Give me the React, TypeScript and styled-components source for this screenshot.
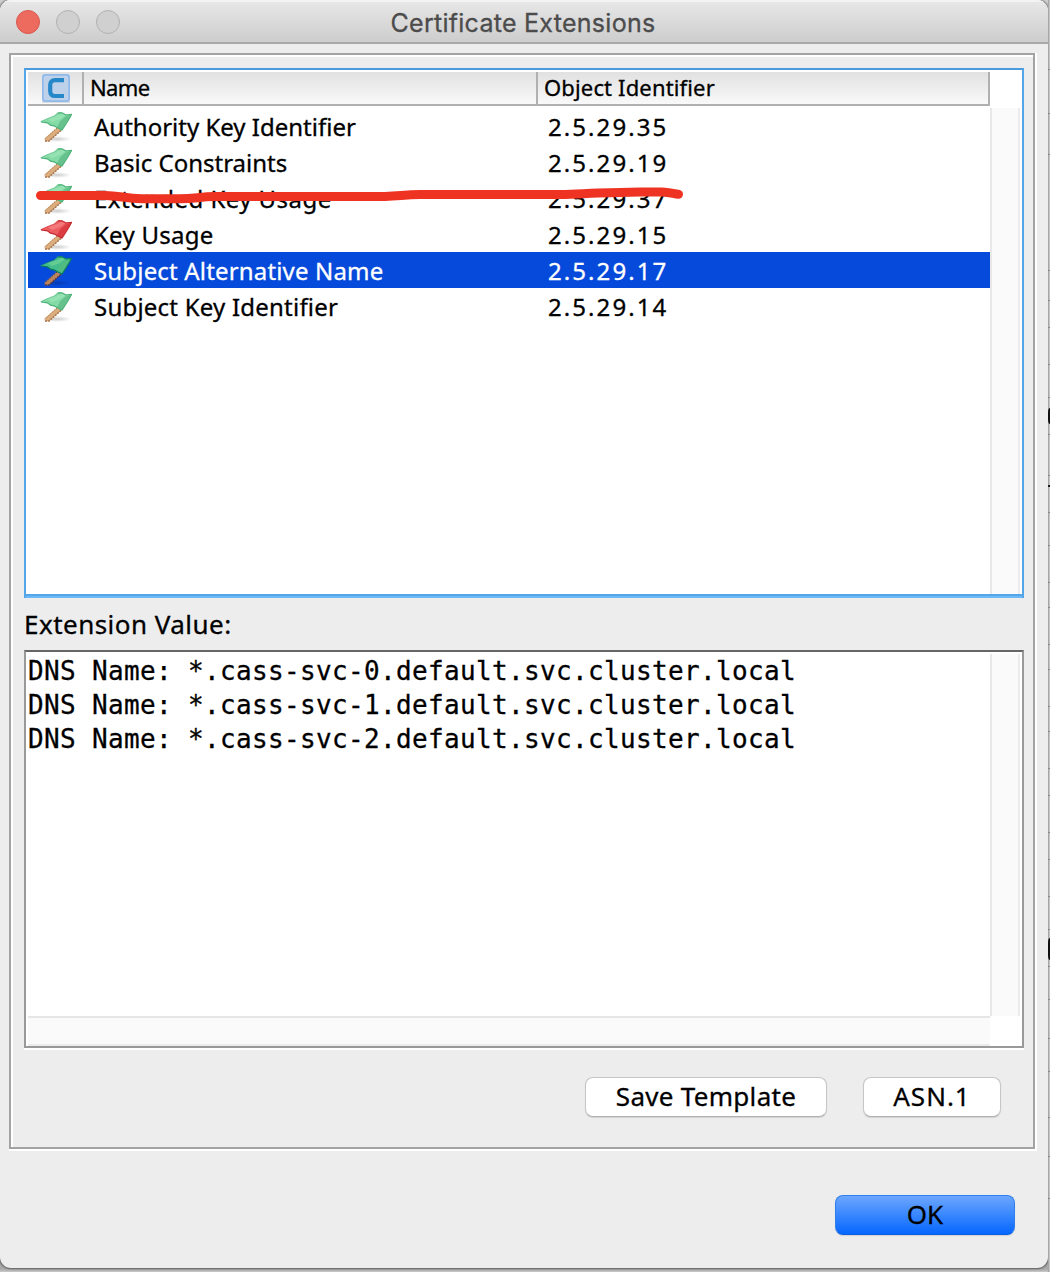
import React from "react";
import styled, { createGlobalStyle } from "styled-components";

const GlobalStyle = createGlobalStyle`
  *, *::before, *::after { box-sizing: border-box; }
  body { margin: 0; background: #b2b2b2; }
`;

const sans = `"Noto Sans", "Open Sans", sans-serif`;

const Desktop = styled.div`
  display: flex;
  width: 1050px;
  height: 1272px;
  overflow: hidden;
  background: linear-gradient(to bottom, #cfcfcf 0, #cfcfcf 24px, #b4b4b4 60px, #a9a9a9 1269px, #cacaca 1272px);
`;

const Window = styled.main`
  display: flex;
  flex-direction: column;
  width: 1048px;
  height: 1268px;
  flex: none;
  border-radius: 11px;
  background: #ededed;
  overflow: hidden;
  font-family: ${sans};
  color: #000;
  -webkit-text-stroke: 0.3px currentColor;
  box-shadow: 0 0 2px 1px rgba(0, 0, 0, 0.45);
`;

const TitleBar = styled.header`
  display: grid;
  grid-template-columns: 1fr auto 1fr;
  align-items: center;
  height: 44px;
  flex: none;
  padding: 0 18px 0 16px;
  border-bottom: 2px solid #a9a9a9;
  box-shadow: inset 0 2px 0 #f3f3f3;
  background: linear-gradient(#e8e8e8, #cdcdcd);
`;

const Lights = styled.div`
  display: flex;
  gap: 16px;
`;

const Light = styled.span<{ $active?: boolean }>`
  width: 24px;
  height: 24px;
  border-radius: 50%;
  border: 1px solid ${(p) => (p.$active ? "#d9574c" : "#b1b1b1")};
  background: ${(p) => (p.$active ? "#ed6a5f" : "#d0d0d0")};
`;

const Title = styled.h1`
  margin: 3px 0 0;
  font: 400 25px/40px Inter, sans-serif;
  letter-spacing: 0.27px;
  color: #4c4c4c;
  white-space: nowrap;
`;

const Group = styled.section`
  display: flex;
  flex-direction: column;
  height: 1096px;
  margin: 9px 13px 0 9px;
  padding: 13px 9px 0 13px;
  border: 2px solid #a3a3a3;
  box-shadow: inset 2px 2px 0 #fff, 2px 0 0 #fff, 0 2px 0 #fff, 2px 2px 0 #fff;
`;

const TablePane = styled.div`
  display: flex;
  flex-direction: column;
  height: 530px;
  flex: none;
  padding: 2px;
  border: 2px solid #54a6e8;
  border-top-color: #4a9ade;
  border-bottom: none;
  box-shadow: inset 0 -2px 0 #6db9f7, inset 0 -4px 0 #54a6e8;
  background: #fff;
`;

const TableHead = styled.div`
  display: grid;
  grid-template-columns: 56px 454px 452px;
  width: 962px;
  height: 34px;
  flex: none;
  border-bottom: 2px solid #b0b0b0;
  background: linear-gradient(#e1e1e1, #f9f9f9);
`;

const HeadCell = styled.div<{ $icon?: boolean; $spacing?: number }>`
  display: flex;
  align-items: flex-start;
  padding: ${(p) => (p.$icon ? "2px 0 0 14px" : "0 0 0 6px")};
  border-right: 2px solid #b0b0b0;
  font-size: 22px;
  letter-spacing: ${(p) => p.$spacing ?? 0}px;
  line-height: 30px;
`;

const Scroller = styled.div`
  display: flex;
  height: 486px;
  margin-top: 2px;
`;

const Rows = styled.div`
  position: relative;
  width: 962px;
`;

const Row = styled.div<{ $selected?: boolean }>`
  display: grid;
  grid-template-columns: 66px 454px 1fr;
  height: 36px;
  line-height: 36px;
  font-size: 24px;
  color: ${(p) => (p.$selected ? "#fff" : "#000")};
  background: ${(p) => (p.$selected ? "#064adb" : "transparent")};
`;

const FlagCell = styled.span`
  display: flex;
  padding: 2px 0 0 12px;
`;

const Cell = styled.span<{ $spacing: number }>`
  padding-top: 1px;
  letter-spacing: ${(p) => p.$spacing}px;
  white-space: nowrap;
`;

const Scribble = styled.svg`
  position: absolute;
  left: 0;
  top: 72px;
`;

const VerticalTrack = styled.div<{ $height: number }>`
  width: 30px;
  height: ${(p) => p.$height}px;
  flex: none;
  border-left: 2px solid #e8e8e8;
  border-right: 2px solid #ececec;
  background: #fafafa;
`;

const HorizontalTrack = styled.div`
  width: 962px;
  height: 30px;
  flex: none;
  border-top: 2px solid #e6e6e6;
  border-bottom: 2px solid #ececec;
  background: #fafafa;
`;

const ValueLabel = styled.label`
  height: 52px;
  flex: none;
  font-size: 26px;
  line-height: 52px;
  letter-spacing: 0.47px;
`;

const ValuePane = styled.div`
  display: flex;
  flex-direction: column;
  height: 398px;
  flex: none;
  padding: 2px 2px 0;
  border: 2px solid #999;
  border-top-color: #666;
  background: #fff;
  box-shadow: 0 2px 0 #fff;
`;

const ValueBody = styled.div`
  display: flex;
  height: 362px;
  flex: none;
`;

const ValueText = styled.pre`
  width: 962px;
  margin: 0;
  font: 26px/34px "DejaVu Sans Mono", monospace;
  letter-spacing: 0.347px;
`;

const Actions = styled.div`
  display: flex;
  justify-content: flex-end;
  gap: 36px;
  padding: 29px 23px 0 0;
`;

const Button = styled.button<{ $width: number; $spacing?: number; $primary?: boolean }>`
  width: ${(p) => p.$width}px;
  height: 40px;
  padding: 0 0 2px;
  border: 1px solid ${(p) => (p.$primary ? "#2f7fee" : "#c6c6c6")};
  border-bottom-color: ${(p) => (p.$primary ? "#0a5fe6" : "#b0b0b0")};
  border-radius: 8px;
  background: ${(p) => (p.$primary ? "linear-gradient(#6ca6fe, #0667ff)" : "#fff")};
  box-shadow: 0 1px 1px rgba(0, 0, 0, 0.12);
  color: #000;
  font: 26px/36px ${sans};
  letter-spacing: ${(p) => p.$spacing ?? 0}px;
`;

const Footer = styled.footer`
  display: flex;
  justify-content: flex-end;
  padding: 46px 33px 0 0;
`;

const Backdrop = styled.div`
  width: 2px;
  flex: none;
  overflow: hidden;
  background: linear-gradient(to right, #a6a6a6 50%, #c4c4c4 50%);
`;

const BackdropCell = styled.div<{ $height: number }>`
  height: ${(p) => p.$height}px;
  border-bottom: 1px solid #898989;
`;

const Mark = styled.div<{ $top: number; $height: number }>`
  height: ${(p) => p.$height}px;
  transform: translateY(${(p) => p.$top}px);
  border-radius: 2px 0 0 2px / 5px 0 0 5px;
  background: #111;
`;

const lines = [
  70, 114, 155, 271, 301, 328, 365, 398, 435, 476, 513, 546, 583, 608, 645, 670, 707, 732, 769,
  796, 833, 860, 897, 930, 967, 1000, 1039, 1072, 1118, 1157, 1199,
];
const marks: Record<number, [number, number]> = { 435: [10, 16], 513: [9, 2], 967: [8, 22] };

type Tone = "green" | "red" | "selected";
const tones = {
  green: { base: "#84dba6", light: "#97e2b3", fold: "#66c18c", edge: "#4fb27b", pole: "#dcae7e", grain: "#a87850" },
  red: { base: "#ec5c60", light: "#f4797b", fold: "#db3d43", edge: "#c42c32", pole: "#dcae7e", grain: "#a87850" },
  selected: { base: "#44bd8c", light: "#64cb91", fold: "#50bc7f", edge: "#087960", pole: "#b9845c", grain: "#54384d" },
};

function Flag({ tone }: { tone: Tone }) {
  const c = tones[tone];
  const id = `shade-${tone}`;
  return (
    <svg width="32" height="32" viewBox="0 0 32 32">
      <defs>
        <radialGradient id={id}>
          <stop offset="0" stopColor="#000" stopOpacity=".2" />
          <stop offset="1" stopColor="#000" stopOpacity="0" />
        </radialGradient>
      </defs>
      <ellipse cx="17" cy="29" rx="14" ry="3" fill={`url(#${id})`} />
      <path d="M17 17.5 4.5 28.5 5 31.5 9 31 21.5 20Z" fill={c.pole} />
      <path d="M21 20.3 9 31H5" fill="none" stroke={c.grain} strokeWidth="1.6" strokeDasharray="2.2 .8" />
      <path d="M17 18 4.8 29" fill="none" stroke={c.grain} strokeWidth="1" strokeDasharray="1.4 1.4" />
      <path d="M0 11.8 8 8.3 14 6 18 2.3 22 2.6 26 4.6 32 4 30 8 26 14 22 20.5 18 18.5 14 16.2 10.5 15.8 8 13.2Z" fill={c.base} />
      <path d="M8 9 17 6 22 3.5 25 5.5 20 9 12 12Z" fill={c.light} />
      <path d="M31 5 25.5 6.5 20 11.5 17 17.5 22 19.5 26 13Z" fill={c.fold} />
      <path d="M18 2.8H22L26 5 31.5 4.5 29 9 26 14 22 20 17.5 17.8 14 15.8 10.5 15.2 7.5 12.8 1 12" fill="none" stroke={c.edge} strokeWidth="1.2" />
      <path d="M1 11.5 8 8.3 14 6 18 3" fill="none" stroke={c.edge} strokeWidth="1" strokeOpacity=".55" />
    </svg>
  );
}

function CriticalIcon() {
  return (
    <svg width="28" height="30" viewBox="0 0 28 30">
      <path d="M0 27H28V29H0Z" fill="#a5adb5" fillOpacity=".35" />
      <rect x=".8" y=".8" width="26.4" height="26.4" rx="2.5" fill="#bdd1ea" stroke="#91b9ea" strokeWidth="1.8" />
      <path d="M22 6.2H13Q8.2 6.2 8.2 11V17Q8.2 22 13 22H22" fill="none" stroke="#2688c8" strokeWidth="4.2" />
    </svg>
  );
}

const extensions: { name: string; oid: string; tone: Tone; spacing: number }[] = [
  { name: "Authority Key Identifier", oid: "2.5.29.35", tone: "green", spacing: 0 },
  { name: "Basic Constraints", oid: "2.5.29.19", tone: "green", spacing: 0 },
  { name: "Extended Key Usage", oid: "2.5.29.37", tone: "green", spacing: 0.45 },
  { name: "Key Usage", oid: "2.5.29.15", tone: "red", spacing: 0.25 },
  { name: "Subject Alternative Name", oid: "2.5.29.17", tone: "selected", spacing: 0.17 },
  { name: "Subject Key Identifier", oid: "2.5.29.14", tone: "green", spacing: 0.22 },
];

const dnsNames = [0, 1, 2].map((n) => `DNS Name: *.cass-svc-${n}.default.svc.cluster.local`);

export default function App() {
  return (
    <Desktop>
      <GlobalStyle />
      <Window>
        <TitleBar>
          <Lights>
            <Light $active />
            <Light />
            <Light />
          </Lights>
          <Title>Certificate Extensions</Title>
        </TitleBar>
        <Group>
          <TablePane>
            <TableHead>
              <HeadCell $icon>
                <CriticalIcon />
              </HeadCell>
              <HeadCell $spacing={-0.65}>Name</HeadCell>
              <HeadCell $spacing={0.15}>Object Identifier</HeadCell>
            </TableHead>
            <Scroller>
              <Rows>
                {extensions.map((e) => (
                  <Row key={e.oid} $selected={e.tone === "selected"}>
                    <FlagCell>
                      <Flag tone={e.tone} />
                    </FlagCell>
                    <Cell $spacing={e.spacing}>{e.name}</Cell>
                    <Cell $spacing={2.07}>{e.oid}</Cell>
                  </Row>
                ))}
                <Scribble width="670" height="30" viewBox="28 180 670 30">
                  <path
                    d="M40.5 195.5H105C120 195.7 125 198.6 142 198.8H180C195 198.5 200 196.8 215 196.5H385C400 196 405 194.8 420 194.6H560C580 194.2 590 193 610 192.8L640 192H662C670 192.2 674 194 678.5 194.3"
                    fill="none"
                    stroke="#ee3323"
                    strokeWidth="9"
                    strokeLinecap="round"
                    strokeLinejoin="round"
                  />
                </Scribble>
              </Rows>
              <VerticalTrack $height={486} />
            </Scroller>
          </TablePane>
          <ValueLabel>Extension Value:</ValueLabel>
          <ValuePane>
            <ValueBody>
              <ValueText>{dnsNames.join("\n")}</ValueText>
              <VerticalTrack $height={362} />
            </ValueBody>
            <HorizontalTrack />
          </ValuePane>
          <Actions>
            <Button $width={242} $spacing={0.3}>Save Template</Button>
            <Button $width={138} $spacing={1}>ASN.1</Button>
          </Actions>
        </Group>
        <Footer>
          <Button $width={180} $primary>OK</Button>
        </Footer>
      </Window>
      <Backdrop>
        {lines.map((y, i) => (
          <BackdropCell key={y} $height={y - (i ? lines[i - 1] : 0)}>
            {marks[y] && <Mark $top={marks[y][0]} $height={marks[y][1]} />}
          </BackdropCell>
        ))}
      </Backdrop>
    </Desktop>
  );
}
